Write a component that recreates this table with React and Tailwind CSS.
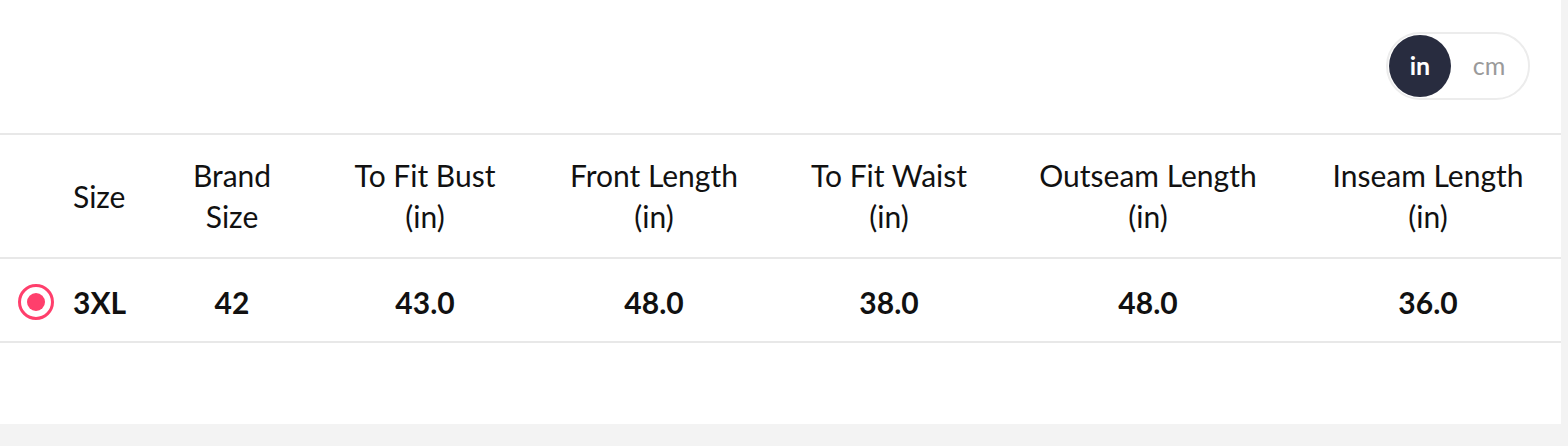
import React from 'react';

const columns = [
  { key: 'size', label: ['Size'] },
  { key: 'brand', label: ['Brand', 'Size'] },
  { key: 'bust', label: ['To Fit Bust', '(in)'] },
  { key: 'front', label: ['Front Length', '(in)'] },
  { key: 'waist', label: ['To Fit Waist', '(in)'] },
  { key: 'outseam', label: ['Outseam Length', '(in)'] },
  { key: 'inseam', label: ['Inseam Length', '(in)'] },
];

const row = {
  size: '3XL',
  brand: '42',
  bust: '43.0',
  front: '48.0',
  waist: '38.0',
  outseam: '48.0',
  inseam: '36.0',
};

const grid =
  'grid grid-cols-[73px_92px_134px_252px_206px_264px_254px_1fr] items-center';

const cellClass = (key) =>
  key === 'size' ? 'text-left' : key === 'inseam' ? 'pl-5 text-center' : 'text-center';

const App = () => {
  return (
    <div className="flex h-[446px] w-full bg-[#f3f3f3] font-['Lato',sans-serif] text-[#111]">
      <div className="flex h-[424px] w-[1561px] flex-col bg-white">

        {/* UNIT TOGGLE */}
        <div className="flex h-[133px] items-start justify-end pr-[31px] pt-[32px]">
          <div className="flex h-[68px] w-[144px] items-center rounded-full border-2 border-[#ececec] p-[1px]">
            <div className="flex h-[62px] w-[62px] items-center justify-center rounded-full bg-[#282c3f] text-[25px] font-bold text-white">
              in
            </div>
            <div className="flex-1 text-center text-[25px] text-[#9a9a9a]">
              cm
            </div>
          </div>
        </div>

        {/* HEADER */}
        <div className={`${grid} h-[126px] border-y-2 border-[#e8e8e8] text-[30px] leading-[41px]`}>
          <div />
          {columns.map((col) => (
            <div key={col.key} className={cellClass(col.key)}>
              {col.label.map((line) => (
                <div key={line}>{line}</div>
              ))}
            </div>
          ))}
        </div>

        {/* ROW */}
        <div className={`${grid} h-[84px] border-b-2 border-[#e8e8e8] pt-1 text-[30px] font-bold`}>
          <div className="flex justify-center pr-[1px]">
            <div className="flex h-[36px] w-[36px] items-center justify-center rounded-full border-[3.5px] border-[#ff3f6c]">
              <div className="h-[18px] w-[18px] rounded-full bg-[#ff3f6c]" />
            </div>
          </div>
          {columns.map((col) => (
            <div key={col.key} className={cellClass(col.key)}>
              {row[col.key]}
            </div>
          ))}
        </div>

      </div>
    </div>
  );
};

export default App;
